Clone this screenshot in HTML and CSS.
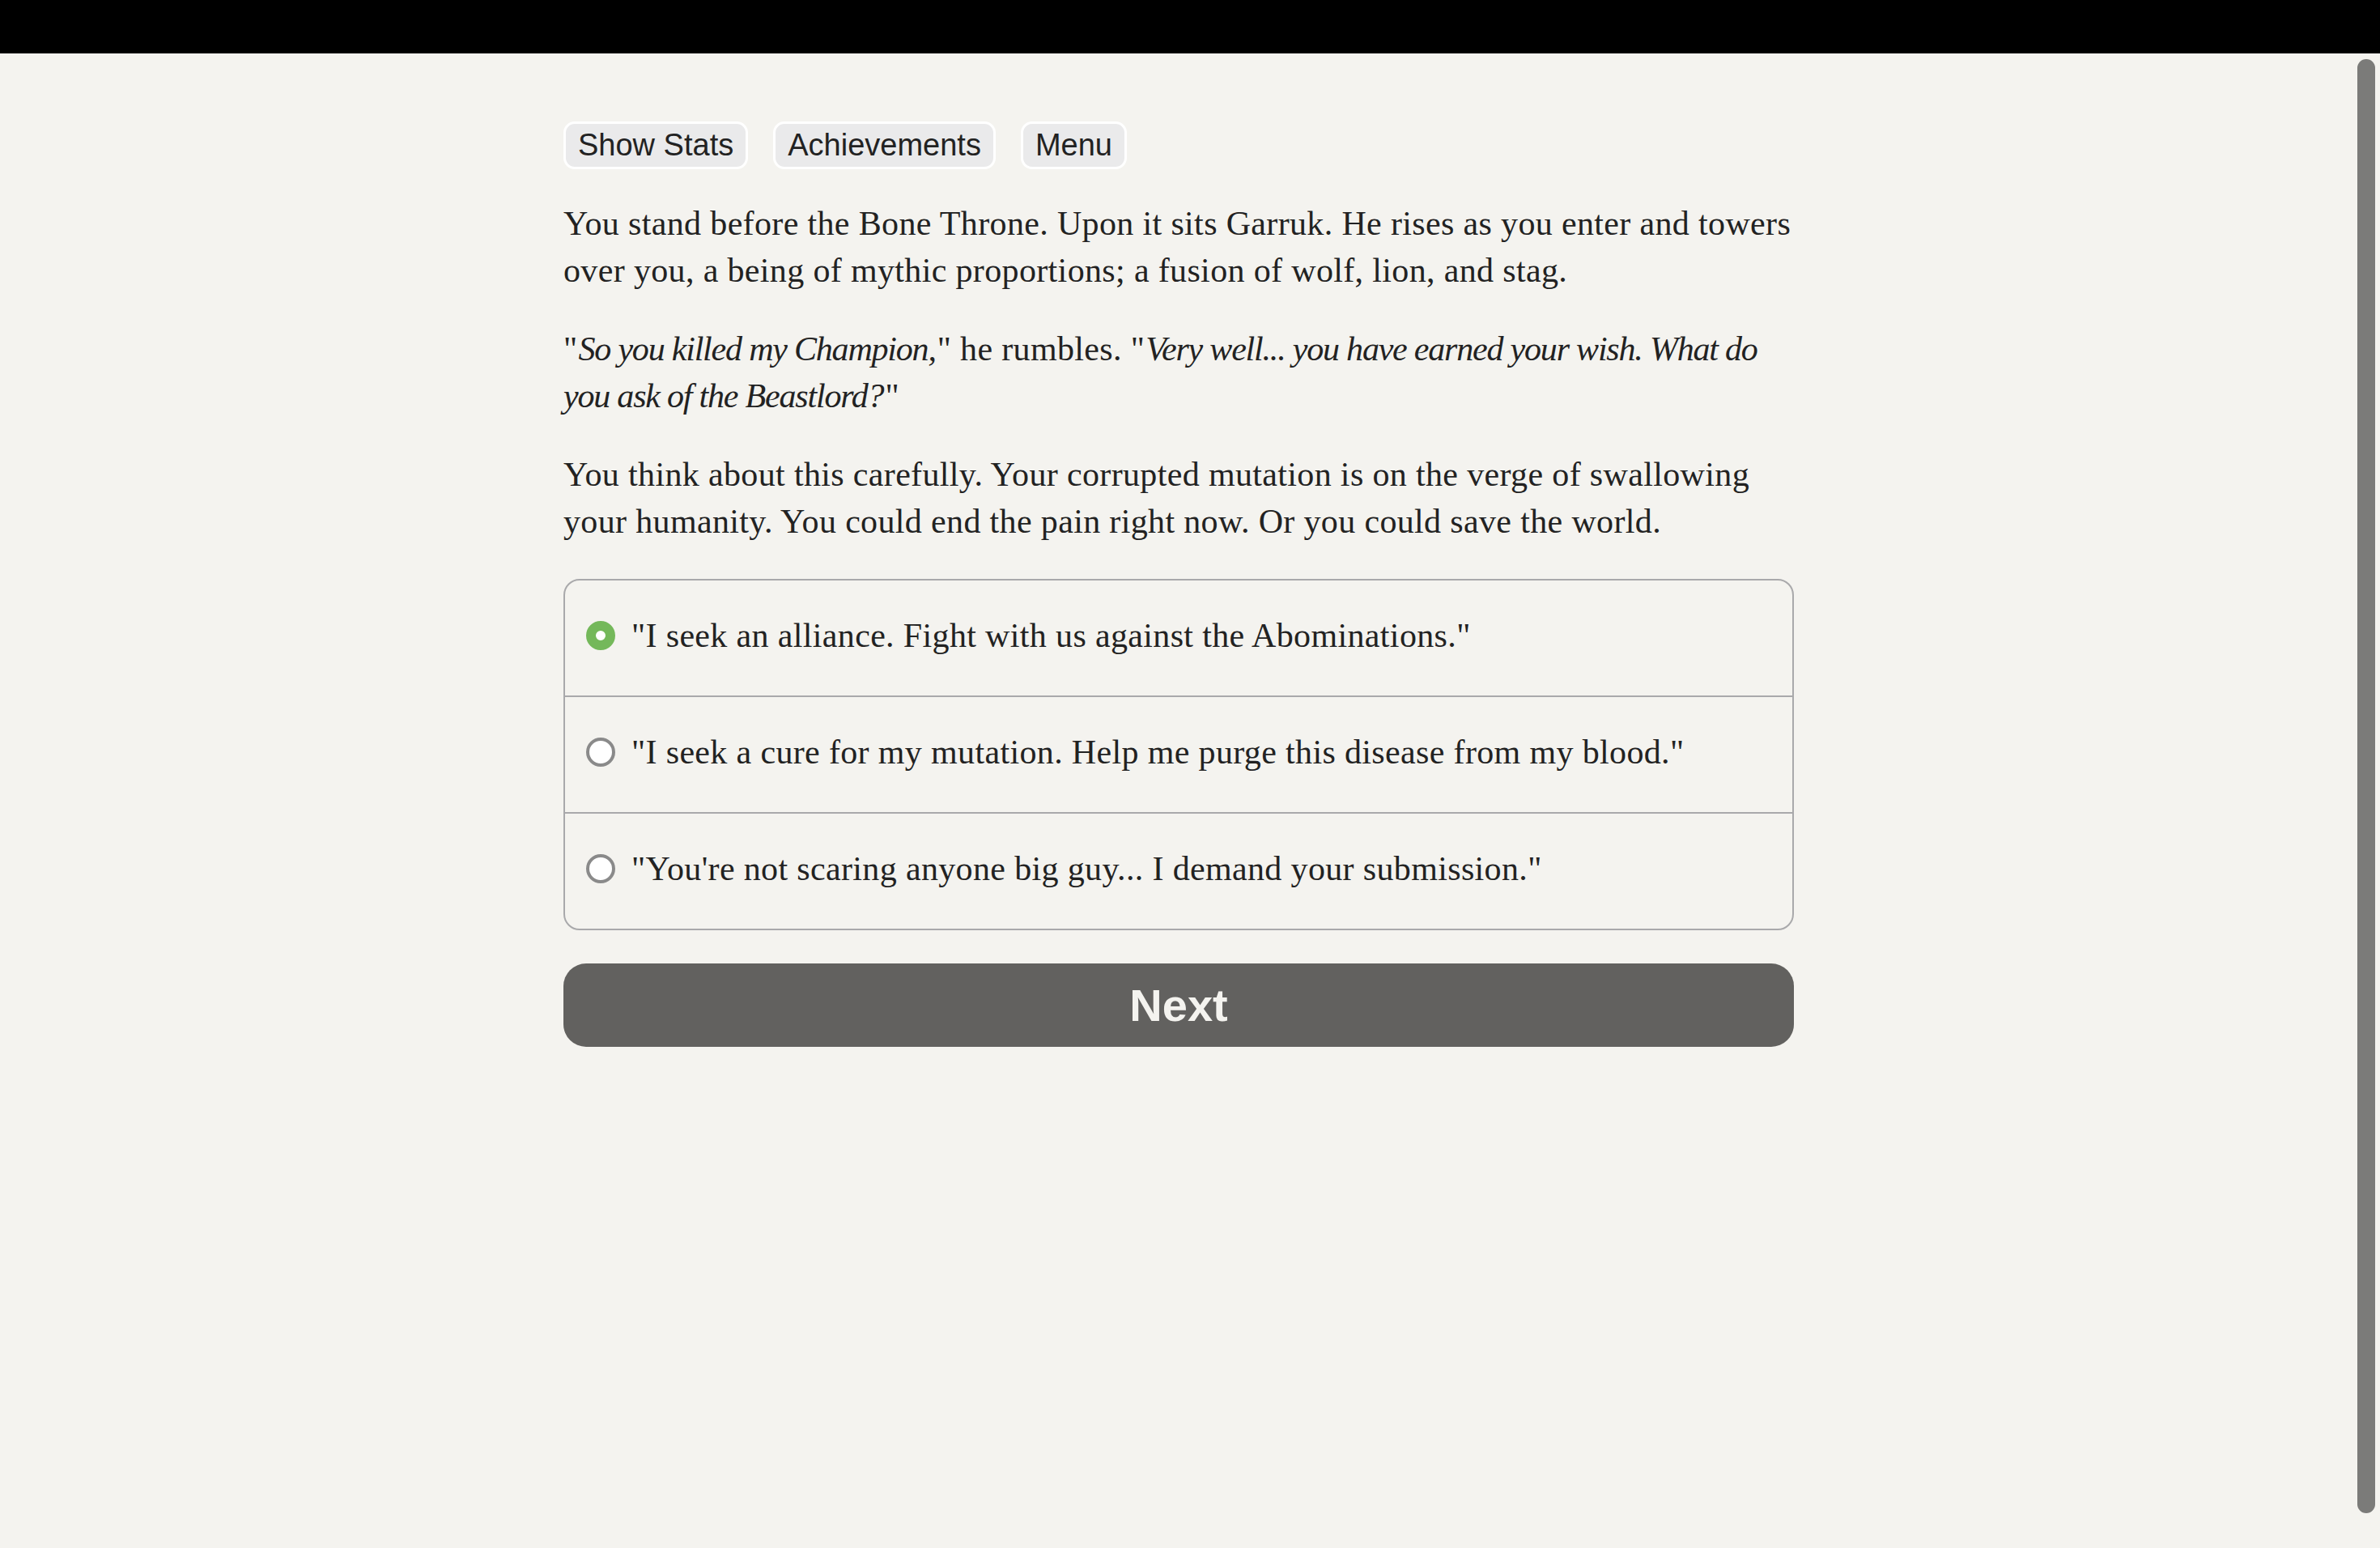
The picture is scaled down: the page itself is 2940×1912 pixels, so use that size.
FILE: index.html
```html
<!DOCTYPE html>
<html lang="en">
<head>
<meta charset="utf-8">
<title>Bone Throne</title>
<link rel="stylesheet" href="styles.css">
</head>
<body>
<div class="topbar"></div>
<div class="page">
  <main class="story">
    <nav class="toolbar">
      <button class="tool-btn" type="button">Show Stats</button>
      <button class="tool-btn" type="button">Achievements</button>
      <button class="tool-btn" type="button">Menu</button>
    </nav>
    <div class="text">
      <p>You stand before the Bone Throne. Upon it sits Garruk. He rises as you enter and towers over you, a being of mythic proportions; a fusion of wolf, lion, and stag.</p>
      <p>"<i>So you killed my Champion,</i>" he rumbles. "<i>Very well... you have earned your wish. What do you ask of the Beastlord?</i>"</p>
      <p>You think about this carefully. Your corrupted mutation is on the verge of swallowing your humanity. You could end the pain right now. Or you could save the world.</p>
    </div>
    <form class="choices">
      <label class="choice"><input class="radio" type="radio" name="choice" checked><span>"I seek an alliance. Fight with us against the Abominations."</span></label>
      <label class="choice"><input class="radio" type="radio" name="choice"><span>"I seek a cure for my mutation. Help me purge this disease from my blood."</span></label>
      <label class="choice"><input class="radio" type="radio" name="choice"><span>"You're not scaring anyone big guy... I demand your submission."</span></label>
    </form>
    <button class="next" type="button">Next</button>
  </main>
</div>
<div class="scroll-thumb"></div>
</body>
</html>
```
FILE: styles.css
```css
html, body {
  margin: 0;
  padding: 0;
  height: 100%;
  overflow: hidden;
}

body {
  background: #f4f3ef;
  color: #222222;
  font-family: "Liberation Serif", "Times New Roman", serif;
}

.topbar {
  height: 66px;
  background: #000;
}

.page {
  padding-right: 28px;
}

.story {
  width: 1520px;
  margin: 0 auto;
}

.toolbar {
  display: flex;
  gap: 31px;
  margin-top: 84px;
}

.tool-btn {
  font-family: "Liberation Sans", Arial, sans-serif;
  font-size: 38px;
  line-height: 45px;
  padding: 4px 15px;
  color: #222;
  background: #eaeaeb;
  border: 3px solid #ffffff;
  border-radius: 14px;
  cursor: pointer;
}

.text {
  margin-top: 38px;
}

.text p {
  margin: 0 0 39px;
  font-size: 42px;
  line-height: 58px;
  letter-spacing: 0.35px;
}

.text p i {
  letter-spacing: -1.2px;
  padding: 0 2px 0 1px;
}

.text p:last-child {
  margin-bottom: 0;
}

.choices {
  margin: 42px 0 0;
  border: 2px solid #a9a9ab;
  border-radius: 20px;
  overflow: hidden;
}

.choice {
  display: flex;
  align-items: center;
  gap: 20px;
  padding: 39px 26px 45px;
  font-size: 42px;
  line-height: 58px;
  letter-spacing: 0.35px;
  cursor: pointer;
}

.choice + .choice {
  border-top: 2px solid #a9a9ab;
}

.radio {
  appearance: none;
  -webkit-appearance: none;
  margin: 0;
  flex: 0 0 auto;
  width: 36px;
  height: 36px;
  box-sizing: border-box;
  border-radius: 50%;
  border: 4px solid #8a8a8a;
  background: #ffffff;
}

.radio:checked {
  border: 12px solid #74b85a;
}

.next {
  display: block;
  width: 100%;
  height: 103px;
  margin-top: 41px;
  border: none;
  border-radius: 28px;
  background: #62615f;
  color: #f4f3ef;
  font-family: "Liberation Sans", Arial, sans-serif;
  font-weight: bold;
  font-size: 56px;
  cursor: pointer;
}

.scroll-thumb {
  position: fixed;
  top: 73px;
  right: 6px;
  width: 22px;
  height: 1796px;
  border-radius: 11px;
  background: #7b7b79;
}
```
